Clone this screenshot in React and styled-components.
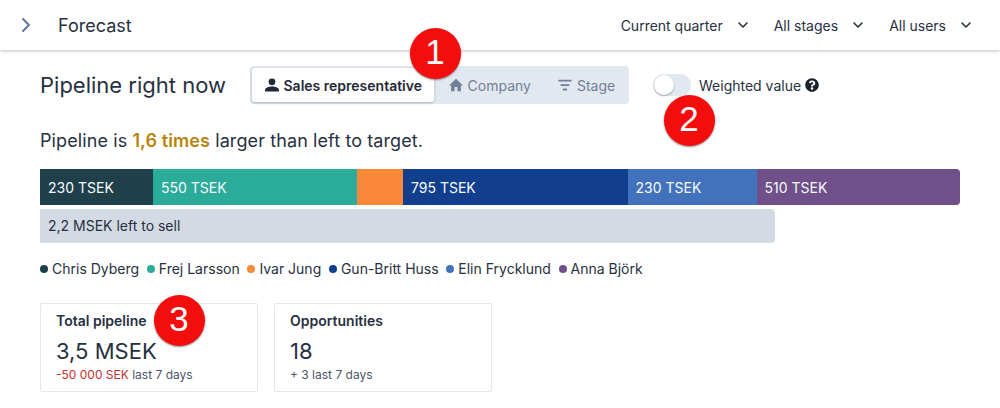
import React from 'react';
import styled, { createGlobalStyle } from 'styled-components';
import { ChevronDown, ChevronRight } from 'lucide-react';
import { FaQuestionCircle } from 'react-icons/fa';

const GlobalStyle = createGlobalStyle`
  html, body {
    margin: 0;
    background: #fff;
    font-family: Inter, "Liberation Sans", sans-serif;
    color: #1f2937;
  }
  * {
    box-sizing: border-box;
  }
`;

const Page = styled.div`
  position: relative;
  width: 1000px;
  height: 408px;
  overflow: hidden;
`;

const TopBar = styled.header`
  display: flex;
  align-items: center;
  justify-content: space-between;
  height: 50px;
  padding: 0 26px 0 14px;
  box-shadow: 0 1px 3px rgba(17, 24, 39, 0.28);
`;

const TitleGroup = styled.div`
  display: flex;
  align-items: center;
  gap: 20px;
  font-size: 18px;
  color: #27303f;

  svg {
    color: #64769b;
  }
`;

const Filters = styled.div`
  display: flex;
  gap: 23px;
`;

const Filter = styled.div`
  display: flex;
  align-items: center;
  gap: 12px;
  font-size: 14px;
  color: #27303f;
`;

const Content = styled.main`
  padding: 16px 40px 0;
`;

const HeadingRow = styled.div`
  display: flex;
  align-items: center;
  height: 38px;
`;

const Heading = styled.h1`
  width: 210px;
  margin: 0;
  font-size: 22px;
  font-weight: 400;
  color: #27303f;
`;

const Segmented = styled.div`
  display: flex;
  align-items: center;
  width: 379px;
  height: 38px;
  padding: 2px;
  border-radius: 4px;
  background: #e2e8f0;
`;

const Segment = styled.div`
  display: flex;
  align-items: center;
  gap: ${(props) => (props.$active ? '3.5px' : '4px')};
  height: 34px;
  padding: ${(props) => (props.$active ? '0 11.5px 0 12px' : '0 12px 0 14px')};
  border-radius: 3px;
  font-size: 14px;
  font-weight: ${(props) => (props.$active ? 600 : 400)};
  white-space: nowrap;
  color: ${(props) => (props.$active ? '#1f2937' : '#718096')};
  background: ${(props) => (props.$active ? '#fff' : 'transparent')};
  box-shadow: ${(props) => (props.$active ? '0 1px 3px rgba(17, 24, 39, 0.25)' : 'none')};
`;

const ToggleGroup = styled.div`
  display: flex;
  align-items: center;
  gap: 8px;
  margin-left: 24px;
  font-size: 14px;
  color: #27303f;

  svg {
    margin-left: -4px;
    color: #1a202c;
  }
`;

const Toggle = styled.div`
  display: flex;
  align-items: center;
  width: 38px;
  height: 22px;
  padding: 1px;
  border-radius: 11px;
  background: #e2e8f0;
`;

const Knob = styled.div`
  width: 20px;
  height: 20px;
  border-radius: 50%;
  background: #fff;
  box-shadow: 0 1px 2px rgba(17, 24, 39, 0.35);
`;

const Summary = styled.p`
  margin: 25px 0 16px;
  font-size: 18px;
  line-height: 24px;
  letter-spacing: 0.1px;
  color: #27303f;

  strong {
    font-weight: 600;
    color: #b7860b;
  }
`;

const Bar = styled.div`
  display: flex;
  height: 36px;
  border-radius: 0 4px 4px 0;
  overflow: hidden;
`;

const BarPart = styled.div`
  display: flex;
  align-items: center;
  padding-left: 8px;
  font-size: 14px;
  color: #f7fafc;
  background: ${(props) => props.$color};
`;

const LeftBar = styled.div`
  display: flex;
  align-items: center;
  width: 735px;
  height: 34px;
  margin-top: 4px;
  padding: 0 0 1px 8px;
  border-radius: 0 4px 4px 0;
  font-size: 14px;
  color: #27303f;
  background: #d3dae4;
`;

const Legend = styled.ul`
  display: flex;
  gap: 7.7px;
  margin: 16px 0 0;
  padding: 0;
  list-style: none;
  font-size: 14px;
  line-height: 20px;
  color: #27303f;
`;

const LegendItem = styled.li`
  display: flex;
  align-items: center;
  gap: 4px;
`;

const Dot = styled.span`
  width: 8px;
  height: 8px;
  border-radius: 50%;
  background: ${(props) => props.$color};
`;

const Cards = styled.div`
  display: flex;
  gap: 16px;
  margin-top: 24px;
`;

const Card = styled.section`
  width: 218px;
  height: 89px;
  padding: 9px 15px;
  border: 1px solid #e2e8f0;
  border-radius: 2px;
`;

const CardTitle = styled.div`
  font-size: 14px;
  line-height: 16px;
  font-weight: 600;
  color: #27303f;
`;

const CardValue = styled.div`
  margin-top: 10px;
  font-size: 22px;
  line-height: 24px;
  color: #27303f;
`;

const CardNote = styled.div`
  margin-top: 4px;
  font-size: 12px;
  line-height: 16px;
  color: #4a5568;

  span {
    color: #c53030;
  }
`;

const Badge = styled.div`
  position: absolute;
  left: ${(props) => props.$x - 25.5}px;
  top: ${(props) => props.$y - 25.5}px;
  display: flex;
  align-items: center;
  justify-content: center;
  width: 51px;
  height: 51px;
  padding-bottom: 3px;
  border-radius: 50%;
  font-family: "Liberation Sans", Arial, sans-serif;
  font-size: 35px;
  color: #fff;
  background: #f40d0d;
  box-shadow: 0 1px 2px rgba(0, 0, 0, 0.45);
`;

const PersonIcon = () => (
  <svg width="16" height="16" viewBox="0 0 16 16" fill="currentColor">
    <circle cx="8" cy="4.8" r="3.4" />
    <path d="M1 14.6v-1.5c0-2.4 3.6-3.6 7-3.6s7 1.2 7 3.6v1.5H1z" />
  </svg>
);

const HomeIcon = () => (
  <svg width="16" height="16" viewBox="0 0 16 16" fill="currentColor">
    <path d="M8 1.8L1 8.4h2.1v5.8h3.5V10h2.8v4.2h3.5V8.4H15L8 1.8z" />
  </svg>
);

const StageIcon = () => (
  <svg width="16" height="16" viewBox="0 0 16 16" fill="currentColor">
    <rect x="1.5" y="2.8" width="13" height="1.8" rx="0.4" />
    <rect x="3.5" y="7.2" width="9" height="1.8" rx="0.4" />
    <rect x="5.8" y="11.6" width="4.4" height="1.8" rx="0.4" />
  </svg>
);

const filters = ['Current quarter', 'All stages', 'All users'];

const parts = [
  { label: '230 TSEK', width: 113, color: '#1f3f4b' },
  { label: '550 TSEK', width: 203.5, color: '#2bab9a' },
  { label: '', width: 46.5, color: '#f98838' },
  { label: '795 TSEK', width: 224.5, color: '#113f8e' },
  { label: '230 TSEK', width: 129, color: '#4272bb' },
  { label: '510 TSEK', width: 203.5, color: '#6f508a' },
];

const people = [
  { name: 'Chris Dyberg', color: '#1f3f4b' },
  { name: 'Frej Larsson', color: '#2bab9a' },
  { name: 'Ivar Jung', color: '#f98838' },
  { name: 'Gun-Britt Huss', color: '#113f8e' },
  { name: 'Elin Frycklund', color: '#4272bb' },
  { name: 'Anna Björk', color: '#6f508a' },
];

const App = () => {
  return (
    <Page>
      <GlobalStyle />
      <TopBar>
        <TitleGroup>
          <ChevronRight size={24} strokeWidth={2} />
          Forecast
        </TitleGroup>
        <Filters>
          {filters.map((name) => (
            <Filter key={name}>
              {name}
              <ChevronDown size={16} strokeWidth={2.4} />
            </Filter>
          ))}
        </Filters>
      </TopBar>
      <Content>
        <HeadingRow>
          <Heading>Pipeline right now</Heading>
          <Segmented>
            <Segment $active>
              <PersonIcon />
              Sales representative
            </Segment>
            <Segment>
              <HomeIcon />
              Company
            </Segment>
            <Segment>
              <StageIcon />
              Stage
            </Segment>
          </Segmented>
          <ToggleGroup>
            <Toggle>
              <Knob />
            </Toggle>
            Weighted value
            <FaQuestionCircle size={14} />
          </ToggleGroup>
        </HeadingRow>
        <Summary>
          Pipeline is <strong>1,6 times</strong> larger than left to target.
        </Summary>
        <Bar>
          {parts.map((part, index) => (
            <BarPart key={index} $color={part.color} style={{ width: part.width }}>
              {part.label}
            </BarPart>
          ))}
        </Bar>
        <LeftBar>2,2 MSEK left to sell</LeftBar>
        <Legend>
          {people.map((person) => (
            <LegendItem key={person.name}>
              <Dot $color={person.color} />
              {person.name}
            </LegendItem>
          ))}
        </Legend>
        <Cards>
          <Card>
            <CardTitle>Total pipeline</CardTitle>
            <CardValue>3,5 MSEK</CardValue>
            <CardNote>
              <span>-50 000 SEK</span> last 7 days
            </CardNote>
          </Card>
          <Card>
            <CardTitle>Opportunities</CardTitle>
            <CardValue>18</CardValue>
            <CardNote>+ 3 last 7 days</CardNote>
          </Card>
        </Cards>
      </Content>
      <Badge $x={435} $y={53}>1</Badge>
      <Badge $x={689} $y={120}>2</Badge>
      <Badge $x={179} $y={320}>3</Badge>
    </Page>
  );
};

export default App;
